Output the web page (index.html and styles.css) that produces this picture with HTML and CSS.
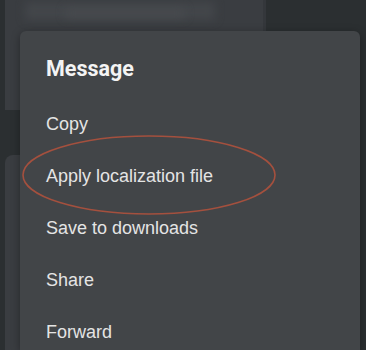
FILE: index.html
```html
<!DOCTYPE html>
<html>
<head>
<meta charset="utf-8">
<link rel="stylesheet" href="styles.css">
</head>
<body>
<div class="chat">
  <div class="bubble top"><div class="blur b1"></div><div class="blur b2"></div></div>
  <div class="gap"></div>
  <div class="bubble mid"></div>
</div>
<div class="menu">
  <div class="title">Message</div>
  <div class="item">Copy</div>
  <div class="item">Apply localization file</div>
  <div class="item">Save to downloads</div>
  <div class="item">Share</div>
  <div class="item">Forward</div>
</div>
<svg class="mark" width="366" height="350" viewBox="0 0 366 350">
  <ellipse cx="149" cy="175" rx="126" ry="39" fill="none" stroke="#a4503e" stroke-width="1.6"/>
</svg>
</body>
</html>
```
FILE: styles.css
```css
html, body { margin: 0; padding: 0; }
body {
  width: 366px; height: 350px; overflow: hidden;
  background: #2b2f31;
  position: relative;
  font-family: "Roboto", "Liberation Sans", sans-serif;
}
.chat { display: flex; flex-direction: column; padding-left: 5px; }
.bubble { background: #3a3d41; }
.bubble.top { width: 258px; height: 110px; border-right: 3px solid #34373b; border-radius: 0 0 8px 0; position: relative; }
.blur { position: absolute; background: #43464a; filter: blur(4px); border-radius: 4px; }
.b1 { left: 20px; top: 2px; width: 190px; height: 18px; }
.b2 { left: 60px; top: 8px; width: 120px; height: 10px; background: #474a4e; }
.gap { height: 45px; }
.bubble.mid { width: 240px; height: 195px; border-radius: 8px 0 0 0; }
.menu {
  position: absolute; left: 20px; top: 31px; width: 340px; height: 319px;
  background: #424548; border-radius: 6px 6px 0 0;
  box-shadow: 0 2px 8px rgba(0,0,0,0.35);
  padding: 22px 0 0 26px; box-sizing: border-box;
  display: flex; flex-direction: column; overflow: hidden;
}
.title { color: #f4f4f4; font-weight: 700; font-size: 21.5px; height: 36px; line-height: 32px; margin-bottom: 9px; flex: none; }
.item { color: #e4e4e4; font-size: 18px; height: 52px; line-height: 52px; font-family: "Liberation Sans", sans-serif; flex: none; }
.mark { position: absolute; left: 0; top: 0; pointer-events: none; }
```
